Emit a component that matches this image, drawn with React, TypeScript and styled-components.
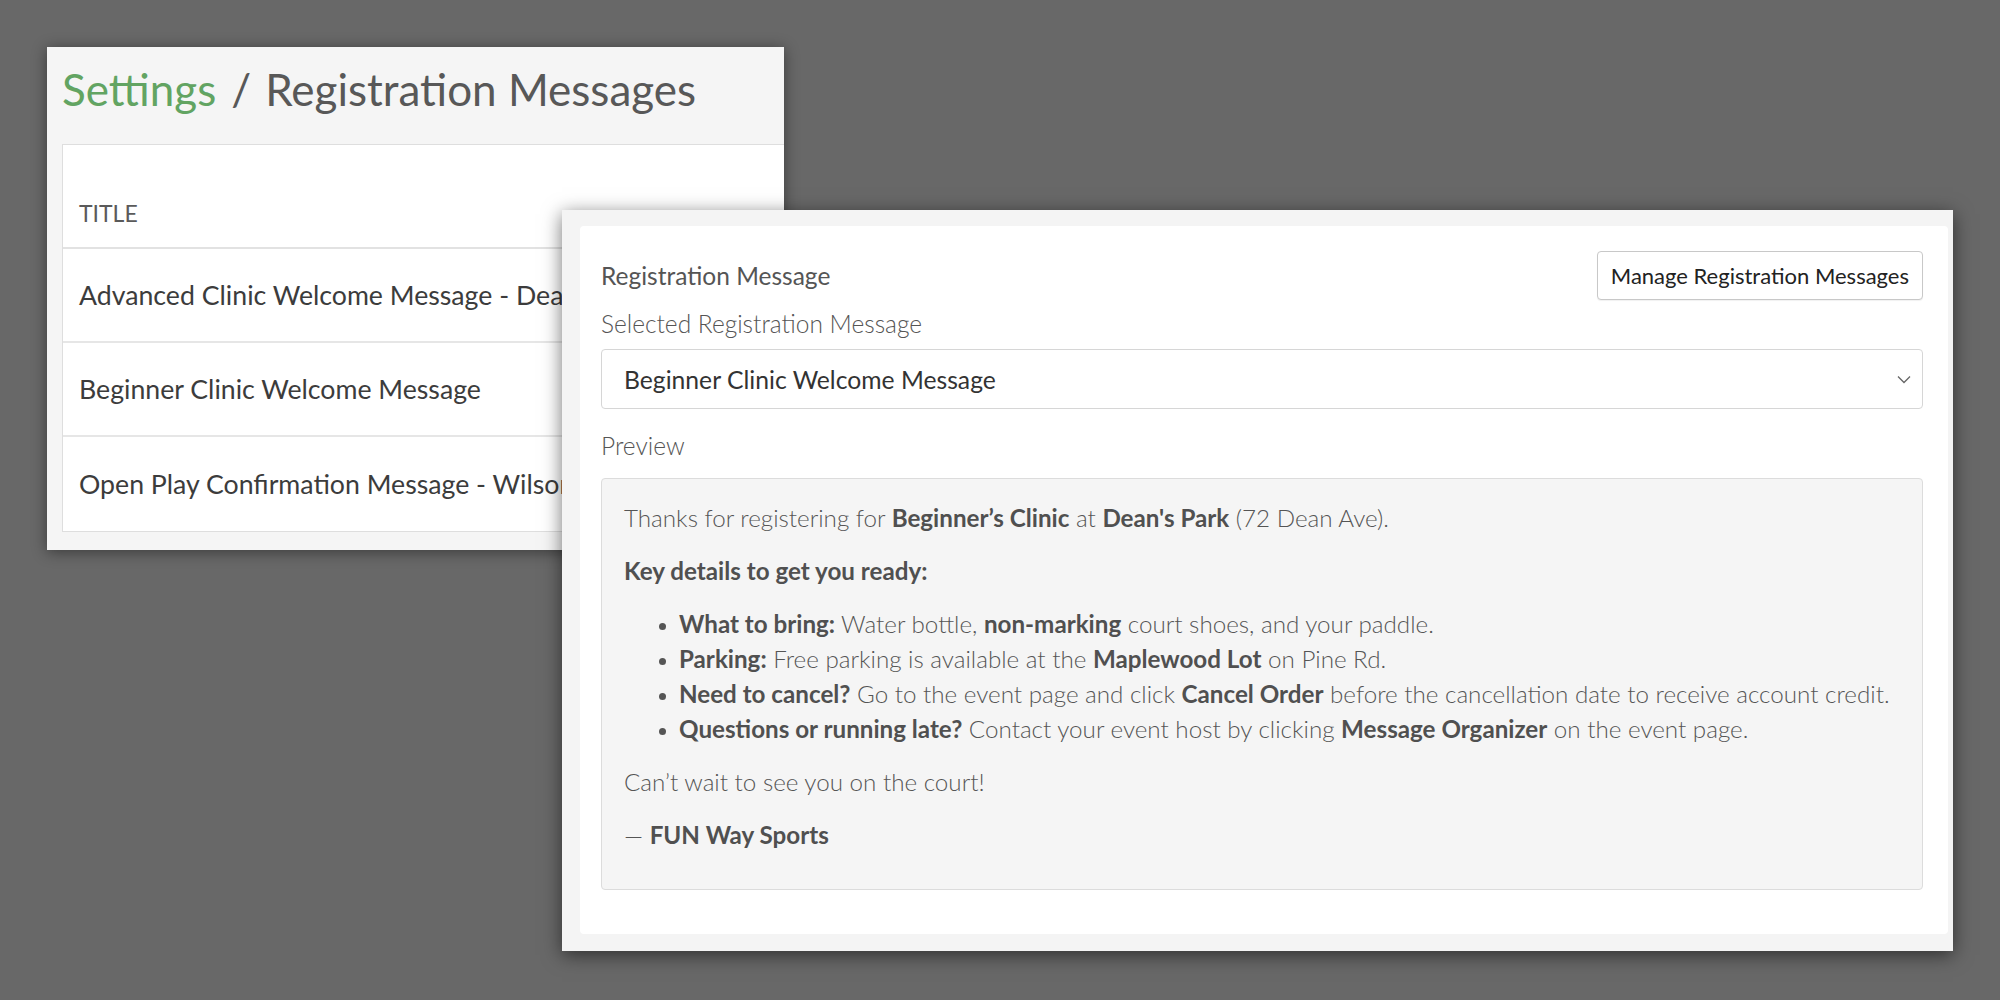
import React from "react";
import styled, { createGlobalStyle } from "styled-components";

const GlobalStyle = createGlobalStyle`
  html, body {
    margin: 0;
    padding: 0;
    background: #686868;
    font-family: "Lato", "Liberation Sans", sans-serif;
  }
`;

const Stage = styled.div`
  position: relative;
  width: 2000px;
  height: 1000px;
  overflow: hidden;
  background: #686868;
`;

/* back window: the settings list */
const BackWindow = styled.section`
  position: absolute;
  left: 47px;
  top: 47px;
  width: 737px;
  height: 503px;
  overflow: hidden;
  background: #f5f5f5;
  box-shadow: 0 2px 14px rgba(0, 0, 0, 0.45);
  padding: 12px 0 0 15px;
  box-sizing: border-box;
`;

const PageTitle = styled.h1`
  margin: 0;
  font-size: 44px;
  font-weight: 400;
  color: #585858;
  line-height: 60px;
  white-space: nowrap;
`;

const Crumb = styled.span`
  color: #62a462;
`;

const Slash = styled.span`
  margin: 0 14px 0 15px;
`;

const TableCard = styled.div`
  margin-top: 25px;
  width: 900px;
  background: #fff;
  border: 1px solid #dedede;
`;

const HeaderRow = styled.div`
  height: 104px;
  display: flex;
  align-items: flex-end;
  padding: 0 0 20px 16px;
  box-sizing: border-box;
  border-bottom: 2px solid #e2e2e2;
  font-size: 23px;
  color: #5a5a5a;
  text-transform: uppercase;
`;

const TableRow = styled.div`
  height: 94px;
  display: flex;
  align-items: center;
  padding-left: 16px;
  box-sizing: border-box;
  border-bottom: 2px solid #e6e6e6;
  font-size: 26.7px;
  color: #3c3c3c;
  white-space: nowrap;
  &:last-child {
    border-bottom: none;
  }
`;

/* front window: event registration message */
const FrontWindow = styled.section`
  position: absolute;
  left: 562px;
  top: 210px;
  width: 1391px;
  height: 741px;
  background: #f4f4f4;
  box-shadow: 0 4px 18px rgba(0, 0, 0, 0.55);
  padding: 16px 5px 17px 18px;
  box-sizing: border-box;
  display: flex;
`;

const Card = styled.div`
  flex: 1;
  background: #fff;
  border-radius: 4px;
  padding: 25px 25px 44px 21px;
  box-sizing: border-box;
  display: flex;
  flex-direction: column;
`;

const HeadRow = styled.div`
  display: flex;
  align-items: center;
  justify-content: space-between;
`;

const Label = styled.div<{ $light?: boolean }>`
  font-size: 24.5px;
  font-weight: ${(p) => (p.$light ? 300 : 400)};
  color: #555;
  line-height: 30px;
`;

const OutlineButton = styled.button`
  height: 49px;
  padding: 0 13px;
  background: #fff;
  border: 1px solid #c8c8c8;
  border-radius: 4px;
  font-family: inherit;
  font-size: 22px;
  color: #222;
  box-shadow: 0 1px 1px rgba(0, 0, 0, 0.06);
`;

const FieldLabel = styled(Label)`
  margin-top: 9px;
`;

const Select = styled.div`
  margin-top: 10px;
  height: 58px;
  border: 1px solid #d6d6d6;
  border-radius: 4px;
  display: flex;
  align-items: center;
  justify-content: space-between;
  padding: 0 11px 0 22px;
  font-size: 24.7px;
  color: #333;
`;

const PreviewLabel = styled(Label)`
  margin-top: 22px;
`;

const PreviewBox = styled.div`
  margin-top: 17px;
  flex: 1;
  background: #f5f5f5;
  border: 1px solid #dcdcdc;
  border-radius: 4px;
  padding: 21px 22px 0 22px;
  font-size: 24.2px;
  font-weight: 300;
  color: #555;
  line-height: 35px;
  white-space: nowrap;

  b {
    font-weight: 700;
    color: #505050;
  }

  p {
    margin: 0 0 18px 0;
  }
`;

const Bullets = styled.ul`
  margin: 0 0 18px 0;
  padding-left: 55px;
  list-style: disc;

  li::marker {
    font-size: 20px;
  }
`;

const Chevron = () => (
  <svg width="14" height="9" viewBox="0 0 14 9">
    <polyline points="1,1.5 7,7.5 13,1.5" fill="none" stroke="#666" strokeWidth="1.3" />
  </svg>
);

const rows = [
  "Advanced Clinic Welcome Message - Dean's Park",
  "Beginner Clinic Welcome Message",
  "Open Play Confirmation Message - Wilson Park",
];

export default function App() {
  return (
    <Stage>
      <GlobalStyle />
      <BackWindow>
        <PageTitle>
          <Crumb>Settings</Crumb>
          <Slash>/</Slash>Registration Messages
        </PageTitle>
        <TableCard>
          <HeaderRow>Title</HeaderRow>
          {rows.map((r) => (
            <TableRow key={r}>{r}</TableRow>
          ))}
        </TableCard>
      </BackWindow>

      <FrontWindow>
        <Card>
          <HeadRow>
            <Label>Registration Message</Label>
            <OutlineButton>Manage Registration Messages</OutlineButton>
          </HeadRow>
          <FieldLabel $light>Selected Registration Message</FieldLabel>
          <Select>
            <span>Beginner Clinic Welcome Message</span>
            <Chevron />
          </Select>
          <PreviewLabel $light>Preview</PreviewLabel>
          <PreviewBox>
            <p>
              Thanks for registering for <b>Beginner’s Clinic</b> at <b>Dean's Park</b> (72 Dean Ave).
            </p>
            <p>
              <b>Key details to get you ready:</b>
            </p>
            <Bullets>
              <li>
                <b>What to bring:</b> Water bottle, <b>non-marking</b> court shoes, and your paddle.
              </li>
              <li>
                <b>Parking:</b> Free parking is available at the <b>Maplewood Lot</b> on Pine Rd.
              </li>
              <li>
                <b>Need to cancel?</b> Go to the event page and click <b>Cancel Order</b> before the
                cancellation date to receive account credit.
              </li>
              <li>
                <b>Questions or running late?</b> Contact your event host by clicking{" "}
                <b>Message Organizer</b> on the event page.
              </li>
            </Bullets>
            <p>Can’t wait to see you on the court!</p>
            <p>
              — <b>FUN Way Sports</b>
            </p>
          </PreviewBox>
        </Card>
      </FrontWindow>
    </Stage>
  );
}
